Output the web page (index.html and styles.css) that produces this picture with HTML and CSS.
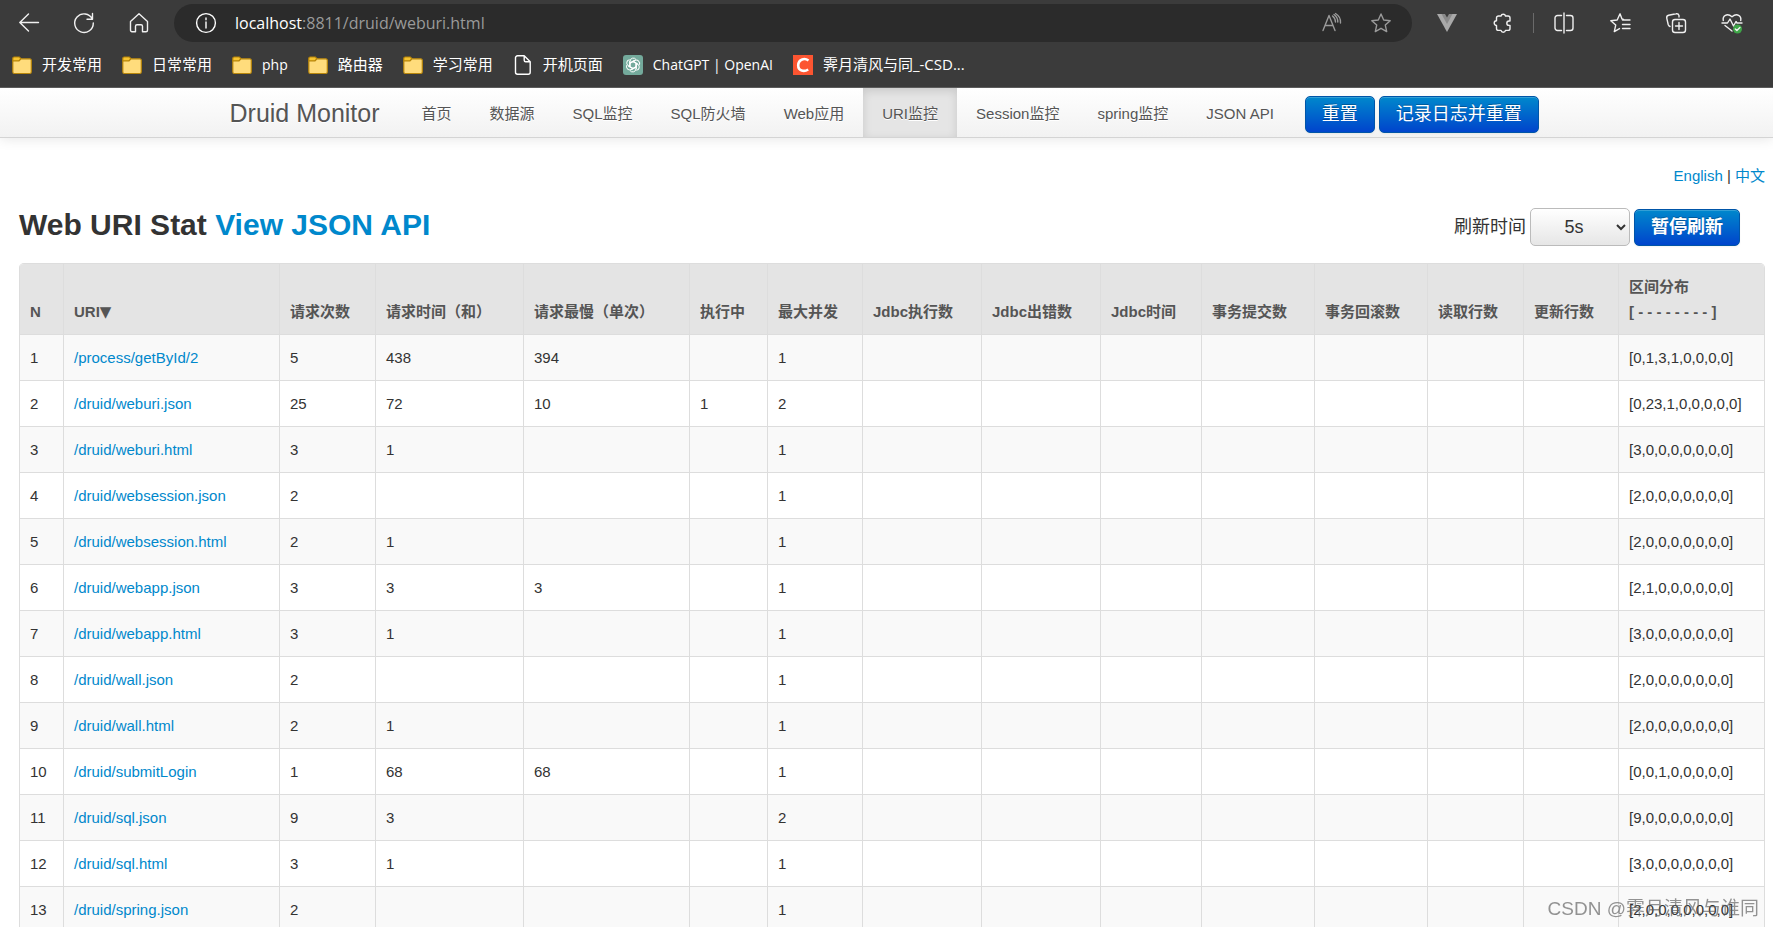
FILE: index.html
```
<!DOCTYPE html>
<html lang="zh-CN">
<head>
<meta charset="utf-8">
<title>Druid Web URI Stat</title>
<link rel="stylesheet" href="styles.css">
</head>
<body>
<header class="browser">
  <div class="toolbar">
    <div class="tools tools-left">
      <button class="tool" aria-label="Back"><svg viewBox="0 0 20 20"><path d="M19.500 9.500H.8M9.500 1 .8 9.500l8.700 8.500"/></svg></button>
      <button class="tool" aria-label="Refresh"><svg viewBox="0 0 20 20"><path d="M18.300 6A9.300 9.300 0 1 0 19.300 10M18.500.5V6.200H13"/></svg></button>
      <button class="tool" aria-label="Home"><svg viewBox="0 0 20 20"><path d="M1.500 8.500 10 .8l8.500 7.700v8.700a1.500 1.500 0 0 1-1.500 1.500h-3.500v-5.500a1.500 1.500 0 0 0-1.500-1.500h-4a1.500 1.500 0 0 0-1.500 1.500v5.500H3a1.500 1.500 0 0 1-1.500-1.500z"/></svg></button>
    </div>
    <div class="address">
      <svg class="icon" viewBox="0 0 20 20"><circle cx="10" cy="10" r="9.400"/><path d="M10 9v6M10 5v1.800"/></svg>
      <span class="url"><b>localhost</b>:8811/druid/weburi.html</span>
      <button class="tool dim" aria-label="Read aloud"><svg viewBox="0 0 20 20"><path d="M1 17.500 7 2.500l6 15M3 12.500h8M10.500 3a8 8 0 0 1 3 6M12 1.500a9 9 0 0 1 3.800 7.500M13.500.5a10 10 0 0 1 5 9.500"/></svg></button>
      <button class="tool dim" aria-label="Favorite"><svg viewBox="0 0 20 20"><path d="m10 1 2.700 6 6.500.7-4.900 4.400 1.400 6.500L10 15.300l-5.700 3.300 1.400-6.500L.8 7.700 7.300 7z"/></svg></button>
    </div>
    <div class="tools tools-right">
      <button class="tool" aria-label="Vue"><svg viewBox="0 0 20 20"><path class="vue-light" d="M0 1h20L10 19z"/><path class="vue-dark" d="M4.500 1h11L10 11z"/><path class="vue-gap" d="M8 1h4l-2 3.500z"/></svg></button>
      <button class="tool" aria-label="Extensions"><svg viewBox="0 0 20 20"><path d="M5.500 3H8a2.300 2.300 0 0 1 4.500 0H15a2 2 0 0 1 2 2v3h-1a2.200 2.200 0 0 0 0 4.400h1v3a2 2 0 0 1-2 2h-2.500a2.300 2.300 0 0 1-4.500 0H5.500a2 2 0 0 1-2-2v-3a2.300 2.300 0 0 1 0-4.600V5a2 2 0 0 1 2-2z"/></svg></button>
      <span class="divider"></span>
      <button class="tool" aria-label="Split screen"><svg viewBox="0 0 20 20"><path d="M7.500 2.500h-4a2.500 2.500 0 0 0-2.500 2.500v10a2.500 2.500 0 0 0 2.500 2.500h4M12.500 2.500h4A2.500 2.500 0 0 1 19 5v10a2.500 2.500 0 0 1-2.500 2.500h-4M10 0v20"/></svg></button>
      <button class="tool" aria-label="Favorites"><svg viewBox="0 0 20 20"><path d="M13.500 6.500 12 6l-2-5.200L7.200 7 .8 7.700l4.900 4.400-1.400 6.500 5.200-3M12.500 7h7.500M12.500 11.500h7.500M12.500 15.500h7.500"/></svg></button>
      <button class="tool" aria-label="Collections"><svg viewBox="0 0 20 20"><rect x="6.500" y="6.500" width="13" height="13" rx="2.500"/><path d="M13 9.500v7M9.500 13h7M4 13.500a3 3 0 0 1-1.800-2L.8 5.300a2.500 2.500 0 0 1 1.800-3L10 .8a2.500 2.500 0 0 1 3 1.700V4"/></svg></button>
      <button class="tool" aria-label="Browser essentials"><svg viewBox="0 0 20 20"><path d="M1.300 7.500C.3 3 5-.5 10 3.800 15-.5 19.700 3 18.700 7.500M0 10h5.500L8 6l3.500 7 2.500-4.500 1 1.500h5M3 12.500l7 5.500"/><circle class="ok" cx="15.500" cy="16" r="4.500"/><path d="m13.300 16 1.600 1.600 3-3"/></svg></button>
    </div>
  </div>
  <nav class="bookmarks" aria-label="Bookmarks">
    <a href="#"><svg class="folder" viewBox="0 0 20 20"><path class="flap" d="M.8 3.500A1.500 1.500 0 0 1 2.300 2h5L9 3.800 7 6H.8z"/><path d="M.8 6H7l2-2.200h9A1.500 1.500 0 0 1 19.300 5.300V17a1.500 1.500 0 0 1-1.500 1.500H2.300A1.500 1.500 0 0 1 .8 17z"/></svg>开发常用</a>
    <a href="#"><svg class="folder" viewBox="0 0 20 20"><path class="flap" d="M.8 3.500A1.500 1.500 0 0 1 2.300 2h5L9 3.800 7 6H.8z"/><path d="M.8 6H7l2-2.200h9A1.500 1.500 0 0 1 19.300 5.300V17a1.500 1.500 0 0 1-1.500 1.500H2.300A1.500 1.500 0 0 1 .8 17z"/></svg>日常常用</a>
    <a href="#" class="latin"><svg class="folder" viewBox="0 0 20 20"><path class="flap" d="M.8 3.500A1.500 1.500 0 0 1 2.300 2h5L9 3.800 7 6H.8z"/><path d="M.8 6H7l2-2.200h9A1.500 1.500 0 0 1 19.300 5.300V17a1.500 1.500 0 0 1-1.500 1.500H2.300A1.500 1.500 0 0 1 .8 17z"/></svg>php</a>
    <a href="#"><svg class="folder" viewBox="0 0 20 20"><path class="flap" d="M.8 3.500A1.500 1.500 0 0 1 2.300 2h5L9 3.800 7 6H.8z"/><path d="M.8 6H7l2-2.200h9A1.500 1.500 0 0 1 19.300 5.300V17a1.500 1.500 0 0 1-1.500 1.500H2.300A1.500 1.500 0 0 1 .8 17z"/></svg>路由器</a>
    <a href="#"><svg class="folder" viewBox="0 0 20 20"><path class="flap" d="M.8 3.500A1.500 1.500 0 0 1 2.300 2h5L9 3.800 7 6H.8z"/><path d="M.8 6H7l2-2.200h9A1.500 1.500 0 0 1 19.300 5.300V17a1.500 1.500 0 0 1-1.500 1.500H2.300A1.500 1.500 0 0 1 .8 17z"/></svg>学习常用</a>
    <a href="#"><svg class="icon" viewBox="0 0 20 20"><path d="M2.500 2.800A2 2 0 0 1 4.500.8h6.700l6 6v10.400a2 2 0 0 1-2 2H4.500a2 2 0 0 1-2-2zM11.200.8v4.500a1.500 1.500 0 0 0 1.500 1.500h4.500"/></svg>开机页面</a>
    <a href="#" class="latin"><svg class="gpt" viewBox="0 0 20 20"><rect width="20" height="20" rx="3"/><g><path id="petal" d="M7 11.700V6.200a3.300 3.300 0 0 1 6-1.700M7 8.200l3.200-1.900 4.800 2.800"/><use href="#petal" transform="rotate(60 10 10)"/><use href="#petal" transform="rotate(120 10 10)"/><use href="#petal" transform="rotate(180 10 10)"/><use href="#petal" transform="rotate(240 10 10)"/><use href="#petal" transform="rotate(300 10 10)"/></g></svg>ChatGPT | OpenAI</a>
    <a href="#"><svg class="csdn" viewBox="0 0 20 20"><rect width="20" height="20"/><path d="M15.500 5.500C12 3 5.500 3.500 5.200 10.300c0 6 6 6.700 10 4.200"/></svg>霁月清风与同_-CSD...</a>
  </nav>
</header>

<div class="page">
  <div class="navbar">
    <div class="navbar-inner">
      <a class="brand" href="#">Druid Monitor</a>
      <nav class="nav">
        <a href="#">首页</a>
        <a href="#">数据源</a>
        <a href="#">SQL监控</a>
        <a href="#">SQL防火墙</a>
        <a href="#">Web应用</a>
        <a href="#" class="active">URI监控</a>
        <a href="#">Session监控</a>
        <a href="#">spring监控</a>
        <a href="#">JSON API</a>
      </nav>
      <div class="actions">
        <button class="btn">重置</button>
        <button class="btn">记录日志并重置</button>
      </div>
    </div>
  </div>

  <main class="content">
    <div class="langs"><a href="#">English</a> | <a href="#">中文</a></div>
    <div class="heading">
      <h1>Web URI Stat <a href="#">View JSON API</a></h1>
      <div class="refresh">
        <label for="period">刷新时间</label>
        <select id="period"><option>5s</option><option>10s</option><option>20s</option></select>
        <button class="btn strong">暂停刷新</button>
      </div>
    </div>

    <table class="stats">
      <colgroup>
        <col class="c-n"><col class="c-uri"><col class="c-short"><col class="c-time"><col class="c-max"><col class="c-run"><col class="c-peak"><col class="c-jdbc"><col class="c-jdbc"><col class="c-jtime"><col class="c-tx"><col class="c-tx"><col class="c-short"><col class="c-peak"><col class="c-hist">
      </colgroup>
      <thead>
        <tr><th>N</th><th>URI<span class="sort">▼</span></th><th>请求次数</th><th>请求时间（和）</th><th>请求最慢（单次）</th><th>执行中</th><th>最大并发</th><th>Jdbc执行数</th><th>Jdbc出错数</th><th>Jdbc时间</th><th>事务提交数</th><th>事务回滚数</th><th>读取行数</th><th>更新行数</th><th>区间分布<br>[ - - - - - - - - ]</th></tr>
      </thead>
      <tbody>
        <tr><td>1</td><td><a href="#">/process/getById/2</a></td><td>5</td><td>438</td><td>394</td><td></td><td>1</td><td></td><td></td><td></td><td></td><td></td><td></td><td></td><td>[0,1,3,1,0,0,0,0]</td></tr>
        <tr><td>2</td><td><a href="#">/druid/weburi.json</a></td><td>25</td><td>72</td><td>10</td><td>1</td><td>2</td><td></td><td></td><td></td><td></td><td></td><td></td><td></td><td>[0,23,1,0,0,0,0,0]</td></tr>
        <tr><td>3</td><td><a href="#">/druid/weburi.html</a></td><td>3</td><td>1</td><td></td><td></td><td>1</td><td></td><td></td><td></td><td></td><td></td><td></td><td></td><td>[3,0,0,0,0,0,0,0]</td></tr>
        <tr><td>4</td><td><a href="#">/druid/websession.json</a></td><td>2</td><td></td><td></td><td></td><td>1</td><td></td><td></td><td></td><td></td><td></td><td></td><td></td><td>[2,0,0,0,0,0,0,0]</td></tr>
        <tr><td>5</td><td><a href="#">/druid/websession.html</a></td><td>2</td><td>1</td><td></td><td></td><td>1</td><td></td><td></td><td></td><td></td><td></td><td></td><td></td><td>[2,0,0,0,0,0,0,0]</td></tr>
        <tr><td>6</td><td><a href="#">/druid/webapp.json</a></td><td>3</td><td>3</td><td>3</td><td></td><td>1</td><td></td><td></td><td></td><td></td><td></td><td></td><td></td><td>[2,1,0,0,0,0,0,0]</td></tr>
        <tr><td>7</td><td><a href="#">/druid/webapp.html</a></td><td>3</td><td>1</td><td></td><td></td><td>1</td><td></td><td></td><td></td><td></td><td></td><td></td><td></td><td>[3,0,0,0,0,0,0,0]</td></tr>
        <tr><td>8</td><td><a href="#">/druid/wall.json</a></td><td>2</td><td></td><td></td><td></td><td>1</td><td></td><td></td><td></td><td></td><td></td><td></td><td></td><td>[2,0,0,0,0,0,0,0]</td></tr>
        <tr><td>9</td><td><a href="#">/druid/wall.html</a></td><td>2</td><td>1</td><td></td><td></td><td>1</td><td></td><td></td><td></td><td></td><td></td><td></td><td></td><td>[2,0,0,0,0,0,0,0]</td></tr>
        <tr><td>10</td><td><a href="#">/druid/submitLogin</a></td><td>1</td><td>68</td><td>68</td><td></td><td>1</td><td></td><td></td><td></td><td></td><td></td><td></td><td></td><td>[0,0,1,0,0,0,0,0]</td></tr>
        <tr><td>11</td><td><a href="#">/druid/sql.json</a></td><td>9</td><td>3</td><td></td><td></td><td>2</td><td></td><td></td><td></td><td></td><td></td><td></td><td></td><td>[9,0,0,0,0,0,0,0]</td></tr>
        <tr><td>12</td><td><a href="#">/druid/sql.html</a></td><td>3</td><td>1</td><td></td><td></td><td>1</td><td></td><td></td><td></td><td></td><td></td><td></td><td></td><td>[3,0,0,0,0,0,0,0]</td></tr>
        <tr><td>13</td><td><a href="#">/druid/spring.json</a></td><td>2</td><td></td><td></td><td></td><td>1</td><td></td><td></td><td></td><td></td><td></td><td></td><td></td><td>[2,0,0,0,0,0,0,0]</td></tr>
      </tbody>
    </table>
  </main>
</div>
<div class="watermark">CSDN @霁月清风与谁同</div>
</body>
</html>
```
FILE: styles.css
```
* { box-sizing: border-box; }

body {
  margin: 0;
  height: 100vh;
  display: flex;
  flex-direction: column;
  overflow: hidden;
  background: #fff;
  color: #333;
  font: 15px/25px "Liberation Sans", "Noto Sans CJK SC", sans-serif;
}

a { color: #0088cc; text-decoration: none; }

/* Browser chrome */
.browser {
  flex: none;
  background: #3b3b3b;
  border-bottom: 1px solid #5c5c5c;
  color: #fff;
  font-family: "Open Sans", "Noto Sans CJK SC", sans-serif;
}

.toolbar { display: flex; align-items: center; padding-top: 4px; }

.tools { display: flex; align-items: center; }
.tools-left { gap: 35px; padding: 0 25px 0 19px; }
.tools-right { gap: 36px; padding: 0 31px 0 25px; }

.tool {
  flex: none;
  width: 20px;
  height: 20px;
  padding: 0;
  border: 0;
  background: none;
  color: #f0f0f0;
}
.tool svg { display: block; width: 20px; height: 20px; }
.tool svg, .icon { fill: none; stroke: currentColor; stroke-width: 1.4; stroke-linejoin: round; stroke-linecap: round; overflow: visible; }
.tool.dim { color: #9a9a9a; }
.icon { flex: none; width: 20px; height: 20px; }

.tool .vue-light { fill: #a9a9a9; stroke: none; }
.tool .vue-dark { fill: #8a8a8a; stroke: none; }
.tool .vue-gap { fill: #3b3b3b; stroke: none; }
.tool .ok { fill: #3fa648; stroke: none; }

.divider { width: 1px; height: 20px; margin: 0 -16px; background: #6a6a6a; }

.address {
  flex: 1;
  display: flex;
  align-items: center;
  gap: 29px;
  height: 38px;
  padding: 0 21px 0 22px;
  border-radius: 19px;
  background: #2b2b2b;
}
.url { flex: 1; margin-left: -10px; color: #9a9a9a; font-size: 16px; }
.url b { color: #fff; font-weight: 400; }

.bookmarks { display: flex; gap: 20px; height: 45px; padding: 0 12px; align-items: center; }
.bookmarks a { display: flex; align-items: center; gap: 10px; color: #fff; font-size: 15px; white-space: nowrap; }
.bookmarks .latin { font-size: 14px; }
.bookmarks svg { flex: none; width: 20px; height: 20px; }
.folder path { fill: #ffdc7c; stroke: #b8860b; stroke-width: 1.2; }
.folder .flap { fill: #f5c330; }
.gpt rect { fill: #74aa9c; }
.gpt path { fill: none; stroke: #fff; stroke-width: 1; }
.csdn rect { fill: #fc5531; }
.csdn path { fill: none; stroke: #fff; stroke-width: 2.600; }

/* Page */
.page { flex: 1; min-height: 0; overflow: hidden; }

.navbar {
  border-bottom: 1px solid #d4d4d4;
  background: linear-gradient(#fff, #f2f2f2);
  box-shadow: 0 1px 12px rgba(0, 0, 0, .1);
}
.navbar-inner { display: flex; align-items: stretch; max-width: 1314px; margin: 0 auto; text-shadow: 0 1px 0 #fff; }
.brand { padding: 2px 23px 0 0; color: #555; font-size: 25px; line-height: 47px; white-space: nowrap; }
.nav { display: flex; }
.nav a { padding: 13px 19px 11px; color: #555; white-space: nowrap; }
.nav .active { background: #e5e5e5; box-shadow: inset 0 3px 10px rgba(0, 0, 0, .125); }
.actions { display: flex; align-items: center; gap: 4px; padding: 4px 0 0 12px; }

.btn {
  height: 37px;
  padding: 0 16px;
  border: 1px solid #0055a8;
  border-radius: 5px;
  background: linear-gradient(#0088cc, #0044cc);
  box-shadow: inset 0 1px 0 rgba(255, 255, 255, .2), 0 1px 2px rgba(0, 0, 0, .05);
  color: #fff;
  font: 18px/25px "Liberation Sans", "Noto Sans CJK SC", sans-serif;
  text-shadow: 0 -1px 0 rgba(0, 0, 0, .25);
  white-space: nowrap;
}
.strong { font-weight: 700; }

.content { padding: 25px 8px 0 19px; }
.langs { text-align: right; }
.heading { display: flex; align-items: center; justify-content: space-between; padding: 12px 25px 0 0; }
h1 { margin: 0; font-size: 30px; line-height: 50px; }
.refresh { display: flex; align-items: center; gap: 4px; padding-top: 4px; font-size: 18px; }

select {
  width: 100px;
  height: 38px;
  border: 1px solid #bbb;
  border-radius: 5px;
  background: linear-gradient(#fff, #e6e6e6);
  color: #333;
  font: 18px/25px "Liberation Sans", "Noto Sans CJK SC", sans-serif;
  text-align: center;
}

.stats {
  width: 100%;
  margin-top: 13px;
  table-layout: fixed;
  border: 1px solid #ddd;
  border-left: 0;
  border-radius: 5px;
  border-spacing: 0;
  overflow: hidden;
}
.stats th, .stats td { padding: 10px; border-left: 1px solid #ddd; text-align: left; white-space: nowrap; }
.stats th { background: #e4e4e4; color: #555; vertical-align: bottom; }
.stats td { height: 46px; border-top: 1px solid #ddd; }
.stats tbody tr:nth-child(odd) { background: #f9f9f9; }
.sort { font-family: "DejaVu Sans", sans-serif; line-height: 1; }

.c-n { width: 44px; }
.c-uri { width: 216px; }
.c-short { width: 96px; }
.c-time { width: 148px; }
.c-max { width: 166px; }
.c-run { width: 78px; }
.c-peak { width: 95px; }
.c-jdbc { width: 119px; }
.c-jtime { width: 101px; }
.c-tx { width: 113px; }
.c-hist { width: 146px; }

.watermark {
  position: fixed;
  right: 14px;
  bottom: 6px;
  color: rgba(90, 90, 90, .65);
  font-size: 19px;
}
```
